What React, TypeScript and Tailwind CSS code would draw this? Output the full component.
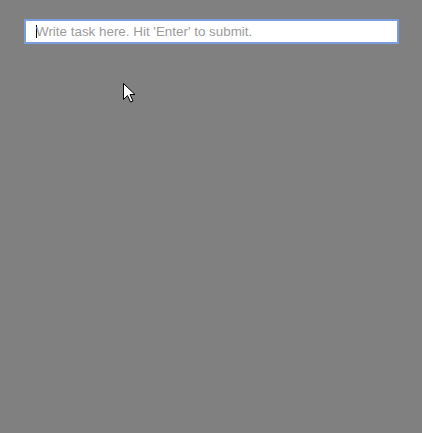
import React from "react";

export default function App() {
  return (
    <div className="relative w-[422px] h-[433px] bg-[#808080] pt-[19px] pl-[24px]" style={{ fontFamily: '"Liberation Sans", Arial, sans-serif' }}>
      <div className="w-[375px] h-[25px] bg-white border-2 border-[#7b9ddc] flex items-center pl-[10px]">
        <div className="w-px h-[13px] bg-black" />
        <span className="text-[13.4px] text-[#9c9c9c] leading-none -ml-px pt-px">Write task here. Hit 'Enter' to submit.</span>
      </div>
      <svg className="absolute left-[123px] top-[83px]" width="13" height="20" viewBox="0 0 13 20">
        <path d="M0.5 0.5 L0.5 16.5 L4.5 12.5 L7.5 19 L10 18 L7 11.5 L12 11.5 Z" fill="white" stroke="black" strokeWidth="1" strokeLinejoin="miter" />
      </svg>
    </div>
  );
}
